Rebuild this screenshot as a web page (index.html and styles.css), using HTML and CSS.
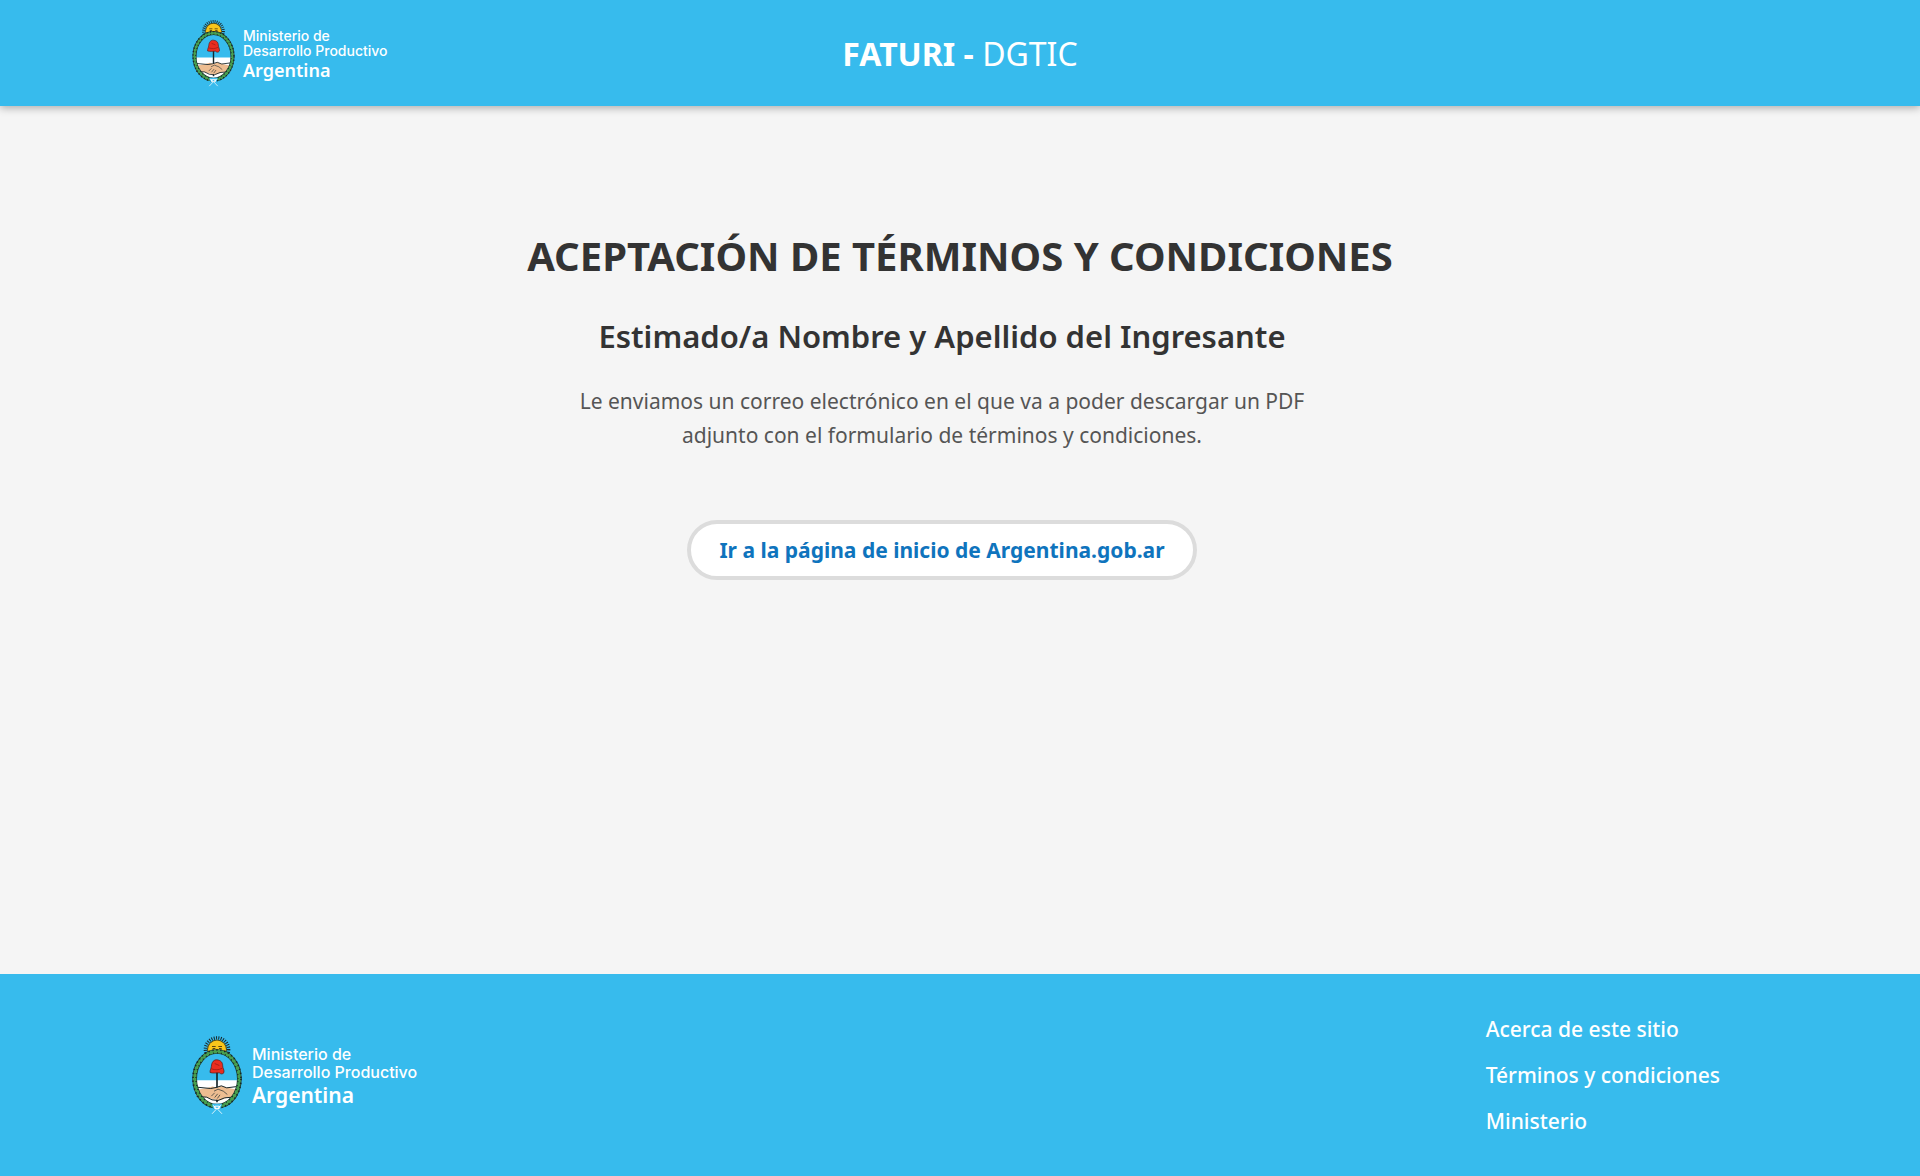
FILE: index.html
```html
<!DOCTYPE html>
<html lang="es">
<head>
<meta charset="utf-8">
<meta name="viewport" content="width=device-width, initial-scale=1">
<title>FATURI - DGTIC</title>
<link rel="stylesheet" href="styles.css">
</head>
<body>
<svg class="sprite" aria-hidden="true">
  <symbol id="crest" viewBox="0 0 150 236">
    <!-- sun -->
    <circle cx="75" cy="40" r="35" fill="none" stroke="#17262b" stroke-width="10" stroke-dasharray="3 4"/>
    <circle cx="75" cy="40" r="30" fill="#4d4a20"/>
    <circle cx="75" cy="40" r="27" fill="#f9c51b"/>
    <path d="M60 31h11M79 31h11M62 37h8M81 37h8" fill="none" stroke="#5a4310" stroke-width="3"/>
    <!-- shield -->
    <ellipse cx="75" cy="128" rx="62" ry="78" fill="#37bbed"/>
    <path d="M13 132h124a62 78 0 0 1-124 0z" fill="#fff"/>
    <path d="M75 106v92" stroke="#17262b" stroke-width="5"/>
    <!-- liberty cap -->
    <path d="M54 109c0-9 3-10 4-18 1-14 8-21 17-20 12 1 17 9 17 17 0 9 5 11 4 21-4 6-10 5-14 1-9 0-19 2-28-1z" fill="#e92d20" stroke="#4a1512" stroke-width="2"/>
    <path d="M58 98c12 4 22 4 33-2M68 82l14 6" fill="none" stroke="#8a1812" stroke-width="2"/>
    <!-- clasped hands -->
    <path d="M14 161l28-5 20-5 13 4 13-6 19 6 29 6-2 20-28 3-20 8-13-1-15-3-18-5-26-1z" fill="#edbd91"/>
    <path d="M14 153l42 4 16-3 16-5 16 6 32-4M14 181l30 2 16 8 18 2 20-8 36-3" fill="none" stroke="#17262b" stroke-width="3"/>
    <path d="M66 165l12-6 16 6 12 10M58 180l10-10M68 184l9-11M76 187l8-11" fill="none" stroke="#17262b" stroke-width="2"/>
    <!-- laurel wreath -->
    <ellipse cx="75" cy="128" rx="67" ry="82" fill="none" stroke="#17332a" stroke-width="14"/>
    <ellipse cx="75" cy="128" rx="67" ry="82" fill="none" stroke="#48a050" stroke-width="10"/>
    <ellipse cx="75" cy="128" rx="72" ry="87" fill="none" stroke="#17262b" stroke-width="5" stroke-dasharray="4 8"/>
    <ellipse cx="75" cy="128" rx="63" ry="78" fill="none" stroke="#17262b" stroke-width="4" stroke-dasharray="3 9" stroke-dashoffset="5"/>
    <!-- ribbon -->
    <path d="M60 203h30l-3 14H63z" fill="#37bbed"/>
    <path d="M63 208l10 7M87 208l-10 7M68 210h14v7H68z" fill="none" stroke="#fff" stroke-width="3"/>
    <path d="M75 217l-15 16M75 217l15 16" fill="none" stroke="#d8f2fc" stroke-width="3"/>
  </symbol>
</svg>

<header class="site-header">
  <div class="container header-grid">
    <a class="brand" href="#">
      <svg class="crest" aria-hidden="true"><use href="#crest"/></svg>
      <span class="brand-text"><span>Ministerio de</span><span>Desarrollo Productivo</span><strong>Argentina</strong></span>
    </a>
    <p class="app-title"><b>FATURI -</b> DGTIC</p>
  </div>
</header>

<main class="container content">
  <h1>ACEPTACIÓN DE TÉRMINOS Y CONDICIONES</h1>
  <div class="message">
    <h2>Estimado/a Nombre y Apellido del Ingresante</h2>
    <p>Le enviamos un correo electrónico en el que va a poder descargar un PDF<br>adjunto con el formulario de términos y condiciones.</p>
    <a class="home-link" href="#">Ir a la página de inicio de Argentina.gob.ar</a>
  </div>
</main>

<footer class="site-footer">
  <div class="container footer-row">
    <a class="brand brand-large" href="#">
      <svg class="crest" aria-hidden="true"><use href="#crest"/></svg>
      <span class="brand-text"><span>Ministerio de</span><span>Desarrollo Productivo</span><strong>Argentina</strong></span>
    </a>
    <nav class="footer-nav" aria-label="Enlaces del sitio">
      <a href="#">Acerca de este sitio</a>
      <a href="#">Términos y condiciones</a>
      <a href="#">Ministerio</a>
    </nav>
  </div>
</footer>
</body>
</html>
```
FILE: styles.css
```css
* { box-sizing: border-box; }

body {
  margin: 0;
  min-height: 100vh;
  display: flex;
  flex-direction: column;
  background: #f5f5f5;
  color: #333;
  font-family: "Noto Sans", "Open Sans", sans-serif;
}

h1, h2, p { margin: 0; }
a { color: inherit; text-decoration: none; }

.sprite { position: absolute; width: 0; height: 0; }

.container { width: 80%; margin: 0 auto; }

.site-header {
  background: #37bbed;
  color: #fff;
  box-shadow: 0 2px 8px rgba(0, 0, 0, .3);
}

.header-grid {
  display: grid;
  grid-template-columns: 1fr auto 1fr;
  align-items: center;
  min-height: 106px;
}

.brand { display: flex; align-items: center; gap: 8px; }
.crest { width: 43px; height: 67px; flex: none; }

.brand-text {
  display: flex;
  flex-direction: column;
  padding-top: 4px;
  font-family: Inter, sans-serif;
  font-weight: 500;
  font-size: 14px;
  line-height: 15px;
}

.brand-text strong {
  font-family: "Noto Sans", sans-serif;
  font-weight: 600;
  font-size: 18px;
  line-height: 24px;
}

.brand-large .crest { width: 50px; height: 79px; }
.brand-large { gap: 10px; }
.brand-large .brand-text { font-size: 16px; line-height: 18px; }
.brand-large .brand-text strong { font-size: 21px; line-height: 28px; }

.app-title { padding-top: 2px; font-size: 32px; line-height: 44px; }

.content {
  flex: 1;
  padding: 124px 0 64px;
  text-align: center;
}

h1 { font-size: 40px; line-height: 52px; }

.message { padding: 32px 36px 0 0; }
h2 { font-size: 31px; line-height: 44px; font-weight: 600; }
.message p {
  margin-top: 26px;
  color: #555;
  font-size: 21px;
  line-height: 34px;
}

.home-link {
  display: inline-block;
  margin-top: 68px;
  padding: 10px 28px;
  border: 4px solid #dcdcdc;
  border-radius: 30px;
  background: #fff;
  color: #0f74bd;
  font-size: 21px;
  line-height: 32px;
  font-weight: 700;
}

.site-footer { background: #37bbed; color: #fff; }

.footer-row {
  display: flex;
  align-items: center;
  justify-content: space-between;
  min-height: 202px;
}

.footer-nav {
  display: flex;
  flex-direction: column;
  gap: 18px;
  padding-right: 8px;
  font-size: 21px;
  line-height: 28px;
  font-weight: 500;
}
```
